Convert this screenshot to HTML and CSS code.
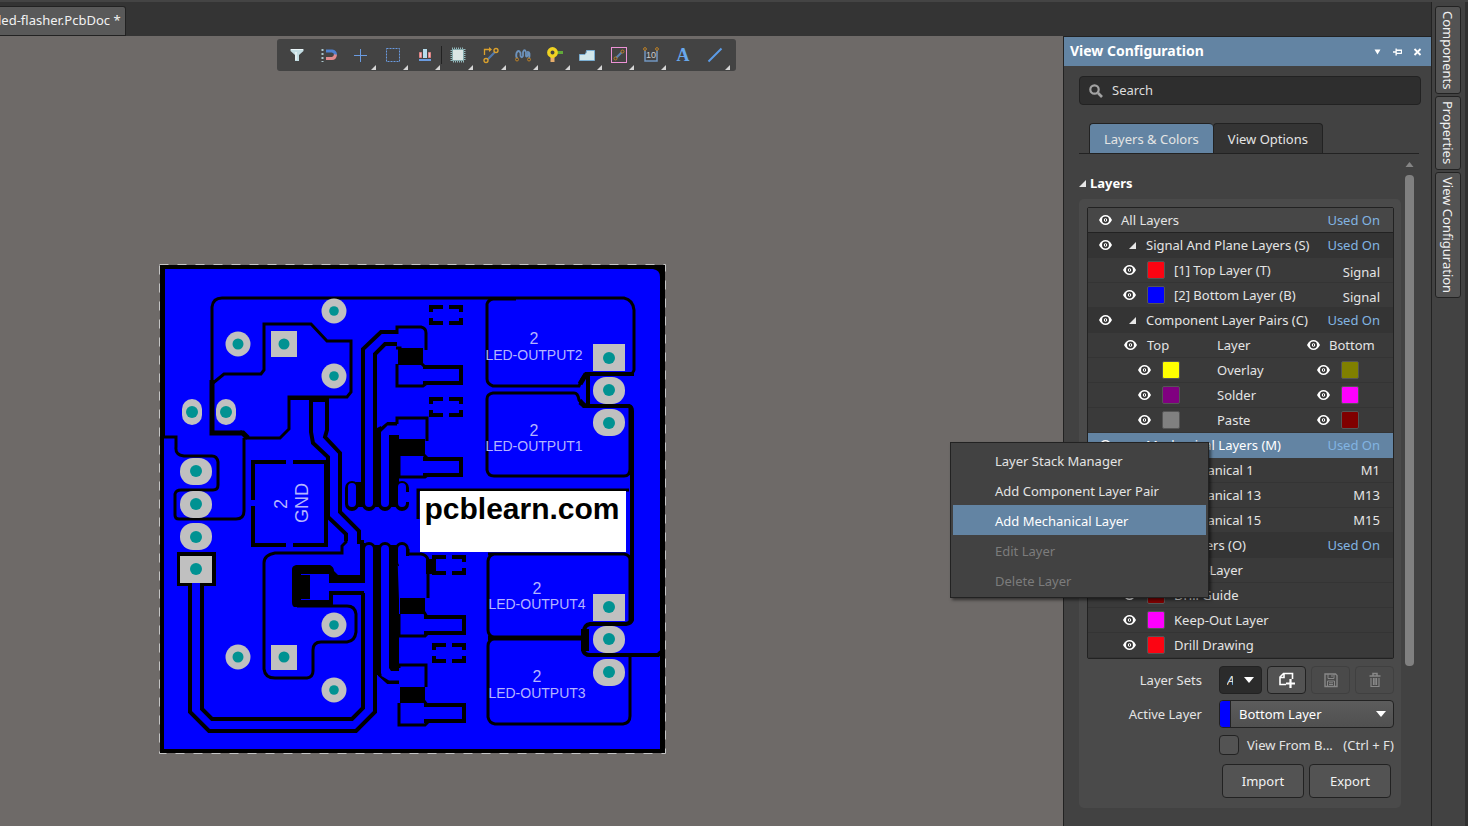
FILE: index.html
```html
<!DOCTYPE html>
<html lang="en">
<head>
<meta charset="utf-8">
<title>led-flasher.PcbDoc</title>
<link rel="stylesheet" href="styles.css">
</head>
<body>
<svg class="defs" aria-hidden="true">
  <symbol id="eye" viewBox="0 0 13 10"><path d="M0 5Q2.500 0 6.500 0T13 5Q10.500 10 6.500 10T0 5Z" fill="#fff"/><circle cx="6.500" cy="5" r="2.600" fill="#fff" stroke="#333" stroke-width="1.700"/><path d="M6.500 4v2" stroke="#444"/></symbol>
  <symbol id="fold" viewBox="0 0 7 7"><path d="M7 0V7H0Z" fill="#e6e6e6"/></symbol>
  <symbol id="down" viewBox="0 0 10 6"><path d="M0 0H10L5 6Z" fill="#fff"/></symbol>
  <symbol id="corners" viewBox="0 0 34 20"><path d="M2 7V2H14M20 2H32V7M32 13V18H20M14 18H2V13" fill="none" stroke="#000" stroke-width="4"/></symbol>
</svg>
<div class="app">
  <header class="doc-tabs"><button class="doc-tab">led-flasher.PcbDoc *</button></header>

  <main class="canvas">
    <div class="toolbar" role="toolbar" aria-label="Active bar">
      <button class="tool" aria-label="Filter"><svg viewBox="0 0 16 16"><path d="M1.500 2H14.500V4L10 8V14H6V8L1.500 4Z" fill="#c3dde3"/><path d="M2 2.500H14" stroke="#edf7fa"/><path d="M7 5V13" stroke="#fff"/></svg></button>
      <button class="tool" aria-label="Snap"><svg viewBox="0 0 16 16"><path d="M5 4H11Q14.500 4.500 14.500 8" fill="none" stroke="#4d80d0" stroke-width="3"/><path d="M14.500 7.500Q14 11.500 11 11.500H5" fill="none" stroke="#e08a8e" stroke-width="3"/><path d="M1.500 2V15" stroke="#a9c6cd" stroke-width="2" stroke-dasharray="2 2"/></svg></button>
      <button class="tool more" aria-label="Move"><svg viewBox="0 0 16 16"><path d="M7.500 2V15M1 8.500H14" stroke="#6a9be0"/></svg></button>
      <button class="tool more" aria-label="Select area"><svg viewBox="0 0 16 16"><rect x="1.500" y="1.500" width="13" height="13" fill="none" stroke="#6a9be0" stroke-dasharray="2 1"/></svg></button>
      <button class="tool more sep" aria-label="Align"><svg viewBox="0 0 16 16"><path d="M2.500 5.500H4.500V10.500H2.500ZM11.500 5.500H13.500V10.500H11.500Z" fill="#ecc0c0" stroke="#df8585"/><rect x="6" y="2" width="4" height="9" fill="#b7dcec"/><path d="M2 13H14" stroke="#6a9be0" stroke-width="2"/></svg></button>
      <button class="tool more" aria-label="Component"><svg viewBox="0 0 16 16"><rect x="2" y="2" width="12" height="12" fill="none" stroke="#93b8bb" stroke-width="3" stroke-dasharray="1 1"/><rect x="2.500" y="2.500" width="11" height="11" fill="#dce5e4" stroke="#86a9ac"/></svg></button>
      <button class="tool more" aria-label="Route"><svg viewBox="0 0 16 16"><path d="M4 13L13 4" stroke="#5179ad" stroke-width="2.200"/><path d="M1.500 8V2.500H7" stroke="#dba12d" stroke-width="1.300" fill="none"/><path d="M6 0L9 2.500L6 5Z" fill="#dba12d"/><circle cx="13" cy="3.500" r="2" fill="#434343" stroke="#dba12d" stroke-width="1.400"/><circle cx="3" cy="13.500" r="2" fill="#434343" stroke="#dba12d" stroke-width="1.400"/></svg></button>
      <button class="tool more" aria-label="Tune"><svg viewBox="0 0 16 16"><path d="M2.500 12Q.5 10 1.500 6Q3.500 2 5.500 6V9Q7 11.500 8 9V5Q9.500 1.500 11 5V9Q12 10.500 13 8V5Q15.500 5 14 12" fill="none" stroke="#6c92bd" stroke-width="1.800"/><circle cx="2" cy="12.500" r="1.500" fill="#434343" stroke="#bd8126"/><circle cx="14" cy="12.500" r="1.500" fill="#434343" stroke="#bd8126"/></svg></button>
      <button class="tool more" aria-label="Via"><svg viewBox="0 0 16 16"><path d="M9 5.500H16" stroke="#61aa39" stroke-width="3"/><path d="M5.500 9V15" stroke="#e7ae6b" stroke-width="4"/><circle cx="5.500" cy="5.500" r="3.700" fill="#444" stroke="#f0d321" stroke-width="3.400"/></svg></button>
      <button class="tool more" aria-label="Polygon"><svg viewBox="0 0 16 16"><path d="M.5 13.500V7.500H5.500Q7.500 7 7.500 3.500H15.500V13.500Z" fill="#d2e7ea" stroke="#7aaed2"/></svg></button>
      <button class="tool more" aria-label="Region"><svg viewBox="0 0 16 16"><rect x=".5" y=".5" width="15" height="15" fill="none" stroke="#ed92d6"/><path d="M5 11L11 5" stroke="#5d82b1" stroke-width="2"/><circle cx="11.500" cy="4.500" r="1.500" fill="#434343" stroke="#bd8126"/><circle cx="4.500" cy="11.500" r="1.500" fill="#434343" stroke="#bd8126"/></svg></button>
      <button class="tool more" aria-label="Dimension"><svg viewBox="0 0 16 16"><path d="M2 3V14H14V3" fill="none" stroke="#7196c1" stroke-width="1.500"/><circle cx="2" cy="2" r="1.400" fill="#434343" stroke="#bd8126"/><circle cx="14" cy="2" r="1.400" fill="#434343" stroke="#bd8126"/><text x="8" y="11" class="dim">10</text></svg></button>
      <button class="tool" aria-label="Text"><svg viewBox="0 0 16 16"><text x="8" y="14" class="glyph">A</text></svg></button>
      <button class="tool more" aria-label="Line"><svg viewBox="0 0 16 16"><path d="M1.500 14.500L14.500 1.500" stroke="#5c9ce8" stroke-width="2"/></svg></button>
    </div>

    <svg class="board" viewBox="158 263 509 492" role="img" aria-label="PCB layout">
      <rect x="159" y="264" width="506" height="490" fill="#000"/>
      <rect x="159.500" y="264.500" width="506" height="489" fill="none" stroke="#6e6a68"/>
      <rect x="159.500" y="264.500" width="506" height="489" fill="none" stroke="#c4c4c4" stroke-dasharray="9 9"/>
      <path d="M165 269H653Q660 270 660 277V749H164V436H165Z" fill="#00f"/>
      <g fill="none" stroke="#000" stroke-width="3">
        <path d="M212 435V307Q213 298 222 298H624Q633 300 634 310V370Q633 374 629 374H586" />
        <path d="M582 379L579 386H493Q487 384 487 379V304Q488 300 493 299H516"/>
        <path d="M583 405L579 400Q578 393 574 393H493Q487 394 487 399V470Q488 476 494 476H624Q630 476 630 469V405"/>
        <path d="M580 554H488M495 638Q488 636 488 630V561Q489 555 494 554H624Q630 555 630 560V623"/>
        <path d="M495 638Q488 640 488 646V717Q489 723 495 724H623Q630 723 630 716V657"/>
        <path d="M213 383L224 374H261L264 370V324H311L327 341H351V392L347 397H289V429L280 438H246L240 431"/>
        <path d="M244 438V511Q244 519 236 519H179Q175 519 175 515V494Q176 490 181 490H213Q218 490 218 485V462Q217 456 212 456H184Q175 455 176 447V437H164"/>
        <path d="M346 533V542L342 546V553H275Q264 555 264 563V669Q265 678 275 678H307Q313 677 313 671V650Q313 642 321 642H347Q355 641 356 632V614Q355 606 347 606H297"/>
      </g>
      <g fill="none" stroke="#000" stroke-width="4">
        <path d="M634 374H586L582 380M588 374V404M580 400L584 406H629Q632 407 632 411V620Q631 623 626 624H590Q584 625 584 632"/>
        <path d="M580 384L586 374M580 402L585 406" stroke-width="5"/>
        <path d="M488 638H582" stroke-width="5"/>
        <path d="M585 629V651" stroke-width="8"/>
        <path d="M583 650Q584 655 590 655H658L661 652"/>
        <path d="M212 380V433H243L248 438" stroke-width="5"/>
        <path d="M286 462H253V500M293 462H328M253 506V545H286M293 545H326V462"/>
        <path d="M289 398H328M309 400H329M311 398V432L313 443L328 457V517L346 534V541M327 400V430L325 437L340 453V512L359 531V542H364"/>
        <path d="M363 593V708L352 719H212L202 709V584M375 550V712L356 731H209L190 712V584"/>
        <path d="M397 332H381L363 349V507M397 344H385L375 354V507"/>
        <path d="M397 424H388L378 432M399 682H388L379 674"/>
      </g>
      <g>
        <path d="M356 482H365V507H356ZM373 430L381 426V507H373ZM389 435H399V507H389ZM360 543H365V579H360ZM373 545H381V675H373ZM389 545H397L399 600V671H391L389 668Z"/>
        <path d="M352 488V504M369 490V504M385 490V504M402 488V504M369 549V560M385 549V560M402 549V560" stroke="#000" stroke-width="14" stroke-linecap="round"/>
        <path d="M352 487V503M369 362V503M385 439V503M402 487V503M369 549V706M385 549V671M402 549V562" stroke="#00f" stroke-width="8" stroke-linecap="round"/>
        <path d="M404 492H410V502H404Z" fill="#00f"/>
        <path d="M385 440V433L389 429H400M385 670V674L390 677H402" fill="none" stroke="#00f" stroke-width="7"/>
        <rect x="399" y="556" width="27" height="42" fill="#00f"/>
      </g>
      <g>
        <path d="M296 565H330Q334 567 334 571L338 575H365V583H329V591H364V595H333V607H294Q292 606 292 602V569Q292 566 296 565Z"/>
        <path d="M310 574H329V583H373V591H329V600H310Z" fill="#00f"/>
        <path d="M301 574.500H310M301 599.500H310" stroke="#00f"/>
      </g>
      <g fill="none" stroke="#000" stroke-width="3">
        <path d="M397 334V327H421Q426 328 426 333V350M397 364V386H423L427 383M425 367L422 364"/>
        <path d="M397 424V418H427V441M399 477H425L429 474M428 459L424 455M399 456V477"/>
        <path d="M408 549V554H421Q427 555 428 560V598M399 614V636H425L429 632M427 617L424 612"/>
        <path d="M399 668V665H426V687M399 703V725H425L429 721M427 705L424 701"/>
        <path d="M396 348H400V357" />
      </g>
      <path d="M423 367H461V383H423M423 459H461V475H423M424 617H464V633H424M424 705H464V721H424" fill="none" stroke="#000" stroke-width="4"/>
      <path d="M398 348H423V365H398ZM399 439H425V456H399ZM400 598H425V614H400ZM400 687H425V703H400Z"/>
      <path d="M426 559H436V574H426Z"/>
      <use href="#corners" x="429" y="305" width="34" height="20"/>
      <use href="#corners" x="429" y="397" width="34" height="20"/>
      <use href="#corners" x="432" y="555" width="34" height="20"/>
      <use href="#corners" x="432" y="643" width="34" height="20"/>
      <rect x="177" y="552" width="39" height="34"/>
      <path d="M192 583V590H200V583Z" fill="#00f"/>
      <g fill="#c0c0c0">
        <circle cx="334" cy="311" r="12.500"/><circle cx="238" cy="344" r="12.500"/><circle cx="334" cy="376" r="12.500"/>
        <circle cx="334" cy="625" r="12.500"/><circle cx="238" cy="657" r="12.500"/><circle cx="334" cy="690" r="12.500"/>
        <rect x="271" y="331" width="26" height="26"/><rect x="271" y="645" width="26" height="25"/>
        <rect x="182" y="399" width="20" height="26" rx="10"/><rect x="216" y="399" width="20" height="26" rx="10"/>
        <rect x="180" y="458" width="32" height="27" rx="13"/><rect x="180" y="491" width="32" height="27" rx="13"/><rect x="180" y="523" width="32" height="27" rx="13"/><rect x="180" y="556" width="32" height="27"/>
        <rect x="593" y="344" width="32" height="27"/><rect x="593" y="377" width="32" height="27" rx="13"/><rect x="593" y="409" width="32" height="27" rx="13"/>
        <rect x="593" y="594" width="32" height="27"/><rect x="593" y="626" width="32" height="27" rx="13"/><rect x="593" y="659" width="32" height="27" rx="13"/>
      </g>
      <g fill="#009292">
        <circle cx="334" cy="311" r="4.800"/><circle cx="238" cy="344" r="5.500"/><circle cx="334" cy="376" r="4.800"/><circle cx="334" cy="625" r="4.800"/><circle cx="238" cy="657" r="5.500"/><circle cx="334" cy="690" r="4.800"/>
        <circle cx="284" cy="344" r="5.500"/><circle cx="284" cy="657" r="5.500"/><circle cx="192" cy="412" r="6"/><circle cx="226" cy="412" r="6"/>
        <circle cx="196" cy="471" r="6"/><circle cx="196" cy="504" r="6"/><circle cx="196" cy="537" r="6"/><circle cx="196" cy="569" r="6"/>
        <circle cx="609" cy="358" r="6"/><circle cx="609" cy="390" r="6"/><circle cx="609" cy="423" r="6"/><circle cx="609" cy="607" r="6"/><circle cx="609" cy="639" r="6"/><circle cx="609" cy="672" r="6"/>
      </g>
      <g class="net">
        <text x="534" y="344">2</text><text x="534" y="360" class="net-name">LED-OUTPUT2</text>
        <text x="534" y="436">2</text><text x="534" y="451" class="net-name">LED-OUTPUT1</text>
        <text x="537" y="594">2</text><text x="537" y="609" class="net-name">LED-OUTPUT4</text>
        <text x="537" y="682">2</text><text x="537" y="698" class="net-name">LED-OUTPUT3</text>
        <g transform="rotate(-90)"><text x="-504" y="287" class="net-big">2</text><text x="-503" y="308" class="net-big">GND</text></g>
      </g>
      <path d="M418 519V490H629" fill="none" stroke="#000" stroke-width="3"/>
      <rect x="420" y="491" width="206" height="61" fill="#fff"/>
      <text x="522" y="519" class="mark">pcblearn.com</text>
    </svg>
  </main>

  <aside class="panel">
    <div class="panel-head">
      <h1>View Configuration</h1>
      <button aria-label="Panel menu"><svg viewBox="0 0 8 8"><path d="M1 1.500H7L4 6.500Z" fill="#fff"/></svg></button>
      <button aria-label="Pin"><svg viewBox="0 0 10 8"><path d="M0 4H3M3.500 0V8M4 2H9.500V6M4 5.500H9.500" fill="none" stroke="#fff" stroke-width="1.500"/></svg></button>
      <button aria-label="Close"><svg viewBox="0 0 8 8"><path d="M1 1L7 7M7 1L1 7" stroke="#fff" stroke-width="1.800"/></svg></button>
    </div>
    <label class="search"><svg viewBox="0 0 14 14"><circle cx="5.500" cy="5.500" r="4.200" fill="none" stroke="#a2a2a2" stroke-width="2.200"/><path d="M9 9L13 13" stroke="#a2a2a2" stroke-width="2.600"/></svg><input type="text" placeholder="Search" aria-label="Search"></label>
    <div class="tabs" role="tablist"><button class="tab active" role="tab" aria-selected="true">Layers &amp; Colors</button><button class="tab" role="tab" aria-selected="false">View Options</button></div>
    <div class="panel-body">
      <section class="content">
        <h2><svg viewBox="0 0 7 7"><use href="#fold"/></svg>Layers</h2>
        <div class="group">
          <ul class="layers">
            <li class="row all"><button class="eye" aria-label="Show all"><svg><use href="#eye"/></svg></button><span>All Layers</span><a href="#used">Used On</a></li>
            <li class="row cat"><button class="eye" aria-label="Show"><svg><use href="#eye"/></svg></button><svg class="fold"><use href="#fold"/></svg><span>Signal And Plane Layers (S)</span><a href="#used">Used On</a></li>
            <li class="row layer"><button class="eye" aria-label="Show"><svg><use href="#eye"/></svg></button><i class="swatch red"></i><span>[1] Top Layer (T)</span><span class="kind">Signal</span></li>
            <li class="row layer"><button class="eye" aria-label="Show"><svg><use href="#eye"/></svg></button><i class="swatch blue"></i><span>[2] Bottom Layer (B)</span><span class="kind">Signal</span></li>
            <li class="row cat"><button class="eye" aria-label="Show"><svg><use href="#eye"/></svg></button><svg class="fold"><use href="#fold"/></svg><span>Component Layer Pairs (C)</span><a href="#used">Used On</a></li>
            <li class="row pair-head"><button class="eye" aria-label="Show top"><svg><use href="#eye"/></svg></button><span>Top</span><span>Layer</span><button class="eye" aria-label="Show bottom"><svg><use href="#eye"/></svg></button><span>Bottom</span></li>
            <li class="row pair"><button class="eye" aria-label="Show top"><svg><use href="#eye"/></svg></button><i class="swatch yellow"></i><span>Overlay</span><button class="eye" aria-label="Show bottom"><svg><use href="#eye"/></svg></button><i class="swatch olive"></i></li>
            <li class="row pair"><button class="eye" aria-label="Show top"><svg><use href="#eye"/></svg></button><i class="swatch purple"></i><span>Solder</span><button class="eye" aria-label="Show bottom"><svg><use href="#eye"/></svg></button><i class="swatch magenta"></i></li>
            <li class="row pair"><button class="eye" aria-label="Show top"><svg><use href="#eye"/></svg></button><i class="swatch gray"></i><span>Paste</span><button class="eye" aria-label="Show bottom"><svg><use href="#eye"/></svg></button><i class="swatch maroon"></i></li>
            <li class="row cat selected"><button class="eye" aria-label="Show"><svg><use href="#eye"/></svg></button><svg class="fold"><use href="#fold"/></svg><span>Mechanical Layers (M)</span><a href="#used">Used On</a></li>
            <li class="row layer"><button class="eye" aria-label="Show"><svg><use href="#eye"/></svg></button><i class="swatch magenta"></i><span>Mechanical 1</span><span>M1</span></li>
            <li class="row layer"><button class="eye" aria-label="Show"><svg><use href="#eye"/></svg></button><i class="swatch magenta"></i><span>Mechanical 13</span><span>M13</span></li>
            <li class="row layer"><button class="eye" aria-label="Show"><svg><use href="#eye"/></svg></button><i class="swatch olive"></i><span>Mechanical 15</span><span>M15</span></li>
            <li class="row cat"><button class="eye" aria-label="Show"><svg><use href="#eye"/></svg></button><svg class="fold"><use href="#fold"/></svg><span>Other Layers (O)</span><a href="#used">Used On</a></li>
            <li class="row layer"><button class="eye" aria-label="Show"><svg><use href="#eye"/></svg></button><i class="swatch gray"></i><span>Multi-Layer</span></li>
            <li class="row layer"><button class="eye" aria-label="Show"><svg><use href="#eye"/></svg></button><i class="swatch maroon"></i><span>Drill Guide</span></li>
            <li class="row layer"><button class="eye" aria-label="Show"><svg><use href="#eye"/></svg></button><i class="swatch magenta"></i><span>Keep-Out Layer</span></li>
            <li class="row layer"><button class="eye" aria-label="Show"><svg><use href="#eye"/></svg></button><i class="swatch red"></i><span>Drill Drawing</span></li>
          </ul>
          <div class="form">
            <label for="sets">Layer Sets</label>
            <div class="sets">
              <span class="select dark"><select id="sets"><option>All Layers</option></select><svg viewBox="0 0 10 6"><use href="#down"/></svg></span>
              <button class="btn" aria-label="New layer set"><svg viewBox="0 0 18 16"><path d="M8 12.500H2V5L5.500 1.500H14.500V7M2 5.500H6V2" fill="none" stroke="#fff" stroke-width="1.600"/><path d="M12.500 7V16M8 11.500H17" stroke="#fff" stroke-width="2.200"/></svg></button>
              <button class="btn" disabled aria-label="Save layer set"><svg viewBox="0 0 18 16"><path d="M3 2H13.500L15 3.500V14.500H3Z" fill="none" stroke="#888" stroke-width="1.400"/><path d="M6 2V6.500H12V2M10 3V5M5.500 14V9H12.500V14M7 10.800H11M7 12.500H11" fill="none" stroke="#888"/></svg></button>
              <button class="btn" disabled aria-label="Delete layer set"><svg viewBox="0 0 18 16"><path d="M3.500 4H14.500M7 3.500V1.500H11V3.500" fill="none" stroke="#888" stroke-width="1.500"/><path d="M5 6V14.500H13V6M7.500 6V13M9 6V13M10.500 6V13" fill="none" stroke="#888" stroke-width="1.200"/></svg></button>
            </div>
            <label for="active">Active Layer</label>
            <span class="select light"><i class="chip"></i><select id="active"><option>Bottom Layer</option></select><svg viewBox="0 0 10 6"><use href="#down"/></svg></span>
            <div class="check"><input type="checkbox" id="flip"><label for="flip"><span>View From B...</span><span>(Ctrl + F)</span></label></div>
            <div class="actions"><button class="btn">Import</button><button class="btn">Export</button></div>
          </div>
        </div>
      </section>
      <div class="scroll"><svg viewBox="0 0 8 5"><path d="M4 0L8 5H0Z" fill="#858585"/></svg><div class="thumb"></div></div>
    </div>
    <div class="menu" role="menu">
      <button role="menuitem">Layer Stack Manager</button>
      <button role="menuitem">Add Component Layer Pair</button>
      <button role="menuitem" class="hot">Add Mechanical Layer</button>
      <button role="menuitem" disabled>Edit Layer</button>
      <button role="menuitem" disabled>Delete Layer</button>
    </div>
  </aside>

  <nav class="side"><button>Components</button><button>Properties</button><button>View Configuration</button></nav>
</div>
</body>
</html>
```
FILE: styles.css
```css
* { box-sizing: border-box; }
body { margin: 0; background: #343434; color: #e4e4e4; font: 13px/18px "Noto Sans", "Open Sans", sans-serif; }
button, input, select { font: inherit; color: inherit; }
button { background: none; border: 0; padding: 0; }
svg { display: block; }
.defs { position: absolute; width: 0; height: 0; }

.app { display: grid; grid-template: 34px 1fr / minmax(0, 1fr) 368px 37px; min-height: 100vh; border-top: 2px solid #444; overflow: hidden; }
.doc-tabs { grid-column: 1 / 3; display: flex; align-items: flex-end; }
.doc-tab { height: 30px; margin-left: -2px; padding: 0 4px 2px 0; background: #595959; border: 1px solid #222; border-left: 0; border-radius: 0 3px 0 0; color: #f2f2f2; }

.canvas { background: #6e6a68; overflow: hidden; }
.toolbar { display: flex; width: 459px; height: 32px; margin: 3px 0 0 277px; padding: 0 5px 0 4px; background: #434343; border-radius: 3px; }
.tool { position: relative; flex: 1; display: flex; align-items: center; justify-content: center; }
.tool svg { width: 16px; height: 16px; overflow: visible; }
.more::after { content: ""; position: absolute; right: 1px; bottom: 1px; border: solid transparent; border-width: 5px 0 0 5px; border-bottom: 0; border-right: 5px solid #d6d6d6; }
.sep { border-right: 1px solid #2a2a2a; border-image: linear-gradient(transparent 25%, #222 25% 75%, transparent 75%) 1; }
.dim { font: 9px "Liberation Sans", sans-serif; fill: #ccc; text-anchor: middle; }
.glyph { font: bold 18px "Liberation Serif", serif; fill: #68a8ec; text-anchor: middle; }
.board { width: 509px; height: 492px; margin: 192px 0 0 158px; }
.net text { font: 16px "Liberation Sans", Arial, sans-serif; fill: #b4b4ff; text-anchor: middle; }
.net .net-name { font-size: 14px; }
.net .net-big { font-size: 18px; }
.mark { font: bold 30px "Liberation Sans", Arial, sans-serif; text-anchor: middle; }

.panel { position: relative; background: #424242; border: solid #222; border-width: 1px 0 0 1px; }
.panel-head { display: flex; align-items: center; gap: 11px; height: 29px; padding: 0 9px 0 6px; background: #6384a3; }
.panel-head h1 { flex: 1; margin: 0; padding-bottom: 2px; font-size: 14px; line-height: 20px; color: #fff; }
.panel-head svg { width: 9px; height: 8px; }
.search { display: flex; align-items: center; gap: 9px; height: 29px; margin: 10px 10px 0 15px; padding: 0 10px 0 9px; background: #2e2e2e; border: 1px solid #222; border-radius: 4px; }
.search svg { width: 14px; height: 14px; }
.search input { flex: 1; min-width: 0; padding: 0 0 2px; background: none; border: 0; outline: 0; }
.search input::placeholder { color: #ddd; opacity: 1; }
.tabs { display: flex; margin: 18px 12px 0 15px; padding-left: 10px; border-bottom: 1px solid #222; }
.tab { height: 30px; padding: 0 14px; background: #343434; border: 1px solid #222; border-width: 1px 1px 0; border-radius: 4px 4px 0 0; }
.tab.active { background: #6384a3; border-right: 0; }
.panel-body { display: flex; gap: 4px; padding: 0 17px 0 15px; }
.content { flex: 1; padding-top: 20px; }
.content h2 { display: flex; align-items: center; gap: 4px; margin: 0 0 6px; font-size: 13px; line-height: 19px; color: #fff; }
.content h2 svg { width: 7px; height: 7px; }
.group { padding: 8px 7px 10px 8px; background: #4a4a4a; border-radius: 5px; }
.scroll { width: 9px; padding-top: 8px; }
.scroll svg { width: 9px; height: 5px; }
.thumb { height: 491px; margin-top: 8px; background: #808080; border-radius: 4px; }

.layers { margin: 0; padding: 0; list-style: none; border: 1px solid #222; border-radius: 2px; background: #3a3a3a; }
.row { display: grid; align-items: center; height: 25px; padding-right: 13px; border-bottom: 1px solid #343434; white-space: nowrap; }
.row a { color: #82b4e2; text-decoration: none; }
.all { grid-template-columns: 22px 1fr auto; padding-left: 11px; background: #474747; border-bottom-color: #222; }
.cat { grid-template-columns: 30px 17px 1fr auto; padding-left: 11px; background: #343434; }
.layer { grid-template-columns: 24px 27px 1fr auto; padding-left: 35px; }
.pair-head { grid-template-columns: 23px 70px 90px 22px 1fr; padding-left: 36px; }
.pair { grid-template-columns: 24px 55px 100px 24px 1fr; padding-left: 50px; }
.selected { background: #6384a3; border-color: #6384a3; color: #fff; }
.kind { padding-top: 3px; }
.eye svg { width: 13px; height: 10px; }
.fold { width: 7px; height: 7px; }
.swatch { width: 18px; height: 18px; border: 1px solid #555; border-radius: 2px; }
.red { background: #fc0412; }
.blue { background: #00f; }
.yellow { background: #ff0; }
.olive { background: #808000; }
.purple { background: #800080; }
.magenta { background: #f0f; }
.gray { background: #808080; }
.maroon { background: #800000; }

.form { display: grid; grid-template-columns: 1fr 175px; gap: 6px 17px; align-items: center; padding-top: 7px; }
.form > label { text-align: right; }
.sets { display: grid; grid-template-columns: 43px repeat(3, 1fr); gap: 5px; }
.select { position: relative; display: flex; height: 28px; border: 1px solid #222; border-radius: 4px; overflow: hidden; }
.select select { appearance: none; flex: 1; min-width: 0; border: 0; background: none; outline: 0; }
.select svg { position: absolute; right: 7px; top: 10px; width: 10px; height: 6px; pointer-events: none; }
.dark { background: #2b2b2b; }
.dark select { padding: 0 28px 0 7px; font-style: italic; }
.light { background: linear-gradient(#5c5c5c, #505050); color: #fff; }
.light select { padding: 0 20px 0 8px; }
.chip { width: 11px; background: #00f; border-right: 1px solid #222; }
.btn { display: flex; align-items: center; justify-content: center; background: #535353; border: 1px solid #222; border-radius: 4px; color: #f2f2f2; }
.btn svg { width: 18px; height: 16px; }
.btn:disabled { background: none; border-color: #404040; }
.check { grid-column: 2; display: flex; align-items: center; gap: 8px; height: 22px; white-space: nowrap; }
.check label { flex: 1; display: flex; justify-content: space-between; }
.check input { appearance: none; width: 20px; height: 20px; margin: 0; background: #535353; border: 1px solid #222; border-radius: 4px; }
.actions { grid-column: 2; display: grid; grid-template-columns: 1fr 1fr; gap: 5px; padding: 2px 3px 0; }
.actions .btn { height: 34px; }

.menu { position: absolute; top: 405px; right: 222px; width: 259px; padding: 2px; background: #424242; border: 1px solid #222; box-shadow: 2px 2px 3px #0008; }
.menu button { display: block; width: 100%; height: 30px; padding: 2px 0 0 42px; text-align: left; }
.menu .hot { background: #6384a3; color: #fff; }
.menu button:disabled { color: #7c7c7c; }

.side { grid-area: 1 / 3 / 3 / 4; display: flex; flex-direction: column; align-items: flex-start; gap: 2px; padding: 4px 0 0 3px; background: #424242; border-left: 1px solid #222; border-right: 3px solid #303030; }
.side button { writing-mode: vertical-rl; width: 26px; padding: 4px 0; background: #535353; border: 1px solid #222; border-radius: 3px; color: #f0f0f0; }
```
